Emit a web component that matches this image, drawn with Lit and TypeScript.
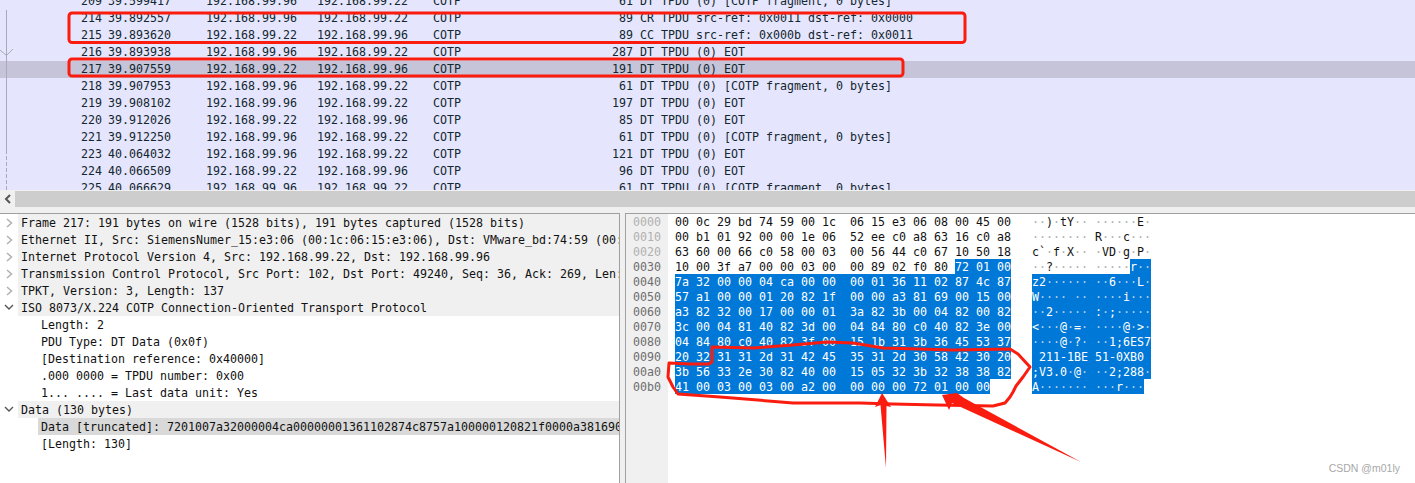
import { LitElement, html, css, nothing } from "lit";
import { customElement } from "lit/decorators.js";

const A = "192.168.99.96";
const B = "192.168.99.22";
const FRAG = "DT TPDU (0) [COTP fragment, 0 bytes]";
const EOT = "DT TPDU (0) EOT";

const PACKETS: [string, string, string, string, string, string][] = [
  ["209", "39.599417", A, B, "61", FRAG],
  ["214", "39.892557", A, B, "89", "CR TPDU src-ref: 0x0011 dst-ref: 0x0000"],
  ["215", "39.893620", B, A, "89", "CC TPDU src-ref: 0x000b dst-ref: 0x0011"],
  ["216", "39.893938", A, B, "287", EOT],
  ["217", "39.907559", B, A, "191", EOT],
  ["218", "39.907953", A, B, "61", FRAG],
  ["219", "39.908102", A, B, "197", EOT],
  ["220", "39.912026", B, A, "85", EOT],
  ["221", "39.912250", A, B, "61", FRAG],
  ["223", "40.064032", A, B, "121", EOT],
  ["224", "40.066509", B, A, "96", EOT],
  ["225", "40.066629", A, B, "61", FRAG],
];

const HEX = [
  "00 0c 29 bd 74 59 00 1c 06 15 e3 06 08 00 45 00",
  "00 b1 01 92 00 00 1e 06 52 ee c0 a8 63 16 c0 a8",
  "63 60 00 66 c0 58 00 03 00 56 44 c0 67 10 50 18",
  "10 00 3f a7 00 00 03 00 00 89 02 f0 80 72 01 00",
  "7a 32 00 00 04 ca 00 00 00 01 36 11 02 87 4c 87",
  "57 a1 00 00 01 20 82 1f 00 00 a3 81 69 00 15 00",
  "a3 82 32 00 17 00 00 01 3a 82 3b 00 04 82 00 82",
  "3c 00 04 81 40 82 3d 00 04 84 80 c0 40 82 3e 00",
  "04 84 80 c0 40 82 3f 00 15 1b 31 3b 36 45 53 37",
  "20 32 31 31 2d 31 42 45 35 31 2d 30 58 42 30 20",
  "3b 56 33 2e 30 82 40 00 15 05 32 3b 32 38 38 82",
  "41 00 03 00 03 00 a2 00 00 00 00 72 01 00 00",
].map((l) => l.split(" "));

const SEL_ROW = 3;
const SEL_BYTE = 13;

type TreeRow = { text: string; head?: boolean; open?: boolean; sel?: boolean };
const TREE: TreeRow[] = [
  { text: "Frame 217: 191 bytes on wire (1528 bits), 191 bytes captured (1528 bits)", head: true },
  { text: "Ethernet II, Src: SiemensNumer_15:e3:06 (00:1c:06:15:e3:06), Dst: VMware_bd:74:59 (00:0c:29:bd:74:59)", head: true },
  { text: "Internet Protocol Version 4, Src: 192.168.99.22, Dst: 192.168.99.96", head: true },
  { text: "Transmission Control Protocol, Src Port: 102, Dst Port: 49240, Seq: 36, Ack: 269, Len: 137", head: true },
  { text: "TPKT, Version: 3, Length: 137", head: true },
  { text: "ISO 8073/X.224 COTP Connection-Oriented Transport Protocol", head: true, open: true },
  { text: "Length: 2" },
  { text: "PDU Type: DT Data (0x0f)" },
  { text: "[Destination reference: 0x40000]" },
  { text: ".000 0000 = TPDU number: 0x00" },
  { text: "1... .... = Last data unit: Yes" },
  { text: "Data (130 bytes)", head: true, open: true },
  { text: "Data [truncated]: 7201007a32000004ca00000001361102874c8757a100000120821f0000a381690015008a382320017000001", sel: true },
  { text: "[Length: 130]" },
];

const isPrintable = (b: string) => {
  const v = parseInt(b, 16);
  return v >= 0x20 && v < 0x7f;
};

@customElement("app-root")
export class AppRoot extends LitElement {
  static styles = css`
    :host {
      display: block;
      width: 1415px;
      height: 483px;
      position: relative;
      overflow: hidden;
      background: #f0f0f0;
      font-family: "DejaVu Sans Mono", monospace;
      font-size: 11.63px;
      color: #111;
    }
    .page { display: flex; flex-direction: column; height: 483px; }

    .list {
      position: relative;
      height: 190px;
      flex: none;
      overflow: hidden;
      background: #e5e5fd;
      color: #12272e;
    }
    .rows { margin-top: -7px; }
    .pkt {
      display: grid;
      grid-template-columns: 102px 104px 111px 116px 100px 100px 1fr;
      height: 17px;
      line-height: 17px;
      white-space: pre;
    }
    .pkt.current { background: #c5c4d9; }
    .right { text-align: right; }
    .time { padding-left: 6px; }
    .info { padding-left: 7px; }
    .guide { position: absolute; left: 0; top: 0; pointer-events: none; }

    .hbar {
      flex: none;
      height: 16px;
      margin-top: 1px;
      display: flex;
      background: #cdcdcd;
    }
    .hbar .btn {
      width: 15px;
      background: #f0f0f0;
      display: flex;
      align-items: center;
      justify-content: center;
    }
    .split { flex: none; height: 6px; }

    .panes { flex: 1; display: flex; min-height: 0; gap: 5px; }
    .tree {
      width: 620px;
      box-sizing: border-box;
      background: #fff;
      border-top: 1px solid #a0a0a0;
      border-right: 1px solid #a0a0a0;
      overflow: hidden;
    }
    .t {
      display: flex;
      height: 17px;
      line-height: 18px;
      white-space: pre;
      overflow: hidden;
    }
    .tw { flex: none; width: 18px; display: flex; align-items: center; justify-content: center; }
    .lbl { flex: 1; min-width: 0; padding-left: 3px; overflow: hidden; }
    .t.head .lbl { background: #f0f0f0; }
    .t.child .tw { width: 38px; }
    .t.sel .lbl { background: #d9d9d9; }

    .hex {
      flex: 1;
      display: flex;
      background: #fff;
      border-top: 1px solid #a0a0a0;
      border-left: 1px solid #a0a0a0;
      line-height: 17px;
    }
    .off {
      flex: none;
      width: 42px;
      box-sizing: border-box;
      padding-left: 7px;
      background: #f0f0f0;
      color: #6e6e6e;
    }
    .off .pale { color: #b0b0b0; }
    .bytes { margin-left: 7px; width: 336px; flex: none; }
    .ascii { margin-left: 21px; flex: none; }
    .line { height: 15px; white-space: pre; }
    .on { background: #0078d7; color: #fff; display: inline-block; height: 15px; vertical-align: top; }
    .dot { color: #aeaeae; }
    .on .dot { color: #b5d6f2; }

    .marks { position: absolute; left: 0; top: 0; pointer-events: none; }
    .mark-line { fill: none; stroke: #fb1c10; stroke-linejoin: round; stroke-linecap: round; }
    .mark-fill { fill: #fb1c10; }
    .wm {
      position: absolute;
      right: 15px;
      bottom: 9px;
      font-family: "Liberation Sans", Arial, sans-serif;
      font-size: 10.5px;
      color: #a8a8a8;
    }
  `;

  private ascii(bytes: string[]) {
    return bytes.map((b) =>
      isPrintable(b)
        ? String.fromCharCode(parseInt(b, 16))
        : html`<span class="dot">·</span>`
    );
  }

  private hexLine(bytes: string[], r: number) {
    const text = bytes.slice(0, 8).join(" ") + "  " + bytes.slice(8).join(" ");
    if (r < SEL_ROW) return html`<div class="line">${text}</div>`;
    if (r === SEL_ROW) {
      const cut = SEL_BYTE * 3 + 1;
      return html`<div class="line">${text.slice(0, cut)}<span class="on">${text.slice(cut)}</span></div>`;
    }
    return html`<div class="line"><span class="on">${text}</span></div>`;
  }

  private asciiLine(bytes: string[], r: number) {
    const a = bytes.slice(0, 8);
    const b = bytes.slice(8);
    if (r < SEL_ROW) {
      return html`<div class="line">${this.ascii(a)} ${this.ascii(b)}</div>`;
    }
    if (r === SEL_ROW) {
      const b1 = bytes.slice(8, SEL_BYTE);
      const b2 = bytes.slice(SEL_BYTE);
      return html`<div class="line">${this.ascii(a)} ${this.ascii(b1)}<span class="on">${this.ascii(b2)}</span></div>`;
    }
    return html`<div class="line"><span class="on">${this.ascii(a)} ${this.ascii(b)}</span></div>`;
  }

  private twisty(row: TreeRow) {
    if (!row.head) return nothing;
    return row.open
      ? html`<svg width="10" height="7" viewBox="0 0 10 7"><path d="M1 1 L5 5 L9 1" fill="none" stroke="#555" stroke-width="1.4"/></svg>`
      : html`<svg width="7" height="10" viewBox="0 0 7 10"><path d="M1 1 L5.5 5 L1 9" fill="none" stroke="#b0b0b0" stroke-width="1.5"/></svg>`;
  }

  render() {
    return html`
      <div class="page">
        <div class="list">
          <div class="rows">
            ${PACKETS.map(
              (p) => html`<div class="pkt ${p[0] === "217" ? "current" : ""}"><span class="right">${p[0]}</span><span class="time">${p[1]}</span><span>${p[2]}</span><span>${p[3]}</span><span>COTP</span><span class="right">${p[4]}</span><span class="info">${p[5]}</span></div>`
            )}
          </div>
          <svg class="guide" width="16" height="190" viewBox="0 0 16 190">
            <path d="M6.5 10 V150" stroke="#a9a9b8" stroke-width="1"/>
            <path d="M6.5 150 V190" stroke="#a9a9b8" stroke-width="1" stroke-dasharray="4 2"/>
            <path d="M0 50 L6.5 55.5 L13 49" fill="none" stroke="#a9a9b8" stroke-width="1"/>
          </svg>
        </div>
        <div class="hbar">
          <div class="btn">
            <svg width="8" height="10" viewBox="0 0 8 10"><path d="M6 1 L2 5 L6 9" fill="none" stroke="#555" stroke-width="2"/></svg>
          </div>
        </div>
        <div class="split"></div>
        <div class="panes">
          <div class="tree">
            ${TREE.map(
              (row) => html`<div class="t ${row.head ? "head" : "child"} ${row.sel ? "sel" : ""}"><span class="tw">${this.twisty(row)}</span><span class="lbl">${row.text}</span></div>`
            )}
          </div>
          <div class="hex">
            <div class="off">
              ${HEX.map((_, r) => html`<div class="line ${r < SEL_ROW ? "pale" : ""}">${(r * 16).toString(16).padStart(4, "0")}</div>`)}
            </div>
            <div class="bytes">${HEX.map((b, r) => this.hexLine(b, r))}</div>
            <div class="ascii">${HEX.map((b, r) => this.asciiLine(b, r))}</div>
          </div>
        </div>
      </div>

      <svg class="marks" width="1415" height="483" viewBox="0 0 1415 483">
        <rect class="mark-line" stroke-width="3" x="69" y="13" width="896" height="29.5" rx="3"/>
        <rect class="mark-line" stroke-width="3" x="69" y="59" width="834" height="17" rx="3"/>
        <path class="mark-line" stroke-width="3" d="M712 347 L712 362 L709 364 L690 364 L669 363 L668 377 L673 387 L678 394 L720 397 L793 403 L860 403 L893 404 L937 405 L993 406 L1005 403 L1010 397 L1013 392 L1016 386 L1023 377 L1030 367 L1018 354 L1010 349 L953 350 L883 348 L853 343 L827 342 L793 345 L753 348 L712 347"/>
        <path class="mark-fill" d="M882 393 L875 407 L880.5 405 L886 468 L886.5 406 L891 407 Z"/>
        <path class="mark-fill" d="M942 395 L949 410 L952 403 L1081 462 L964 398 L957 393 Z"/>
      </svg>
      <div class="wm">CSDN @m01ly</div>
    `;
  }
}
